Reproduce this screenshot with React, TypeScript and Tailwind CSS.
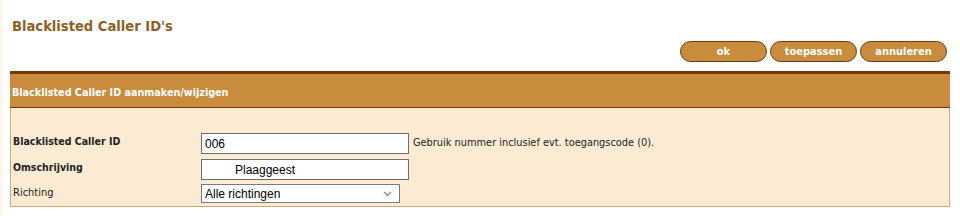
import React from 'react';

const tahoma = { fontFamily: "'DejaVu Sans Condensed', 'DejaVu Sans', sans-serif" };
const arial = { fontFamily: "'Liberation Sans', Arial, sans-serif" };

const PillButton: React.FC<{ label: string }> = ({ label }) => (
  <button
    className="w-[87px] h-[21px] rounded-full bg-[#c98c3c] border border-[#6b3a12] text-white text-[11px] font-bold leading-none font-stretch-condensed"
    style={tahoma}
  >
    {label}
  </button>
);

export default function App() {
  return (
    <div className="w-[960px] h-[216px] bg-white border-l-[3px] border-[#fcf7ee] font-stretch-condensed" style={tahoma}>
      <h1 className="pt-[17px] pl-[9px] text-[14.6px] font-bold text-[#91601f] leading-[18px]">Blacklisted Caller ID's</h1>
      <div className="flex justify-end gap-[3px] pr-[13px] mt-[6px]">
        <PillButton label="ok" />
        <PillButton label="toepassen" />
        <PillButton label="annuleren" />
      </div>
      <div className="ml-[7px] w-[940px] mt-[9px]">
        <div className="border-t-[3px] border-[#7c3507] bg-[#c98c3c] h-[37px] border-b border-b-[#7c3507] flex items-center pl-[2px] pt-[5px]">
          <span className="text-white text-[10.7px] font-bold">Blacklisted Caller ID aanmaken/wijzigen</span>
        </div>
        <div className="bg-[#fbebd2] border border-t-0 border-[#c9aa7c] h-[99px] pt-[25px] pl-[2px]">
          <div className="grid grid-cols-[188px_1fr] items-center text-[11px] text-[#222]">
            <span className="font-bold text-[10.5px] -mt-[3px]">Blacklisted Caller ID</span>
            <div className="flex items-center gap-[4px]">
              <div className="w-[208px] h-[21px] bg-white border border-[#6d6d6d] flex items-center pl-[3px] text-[12px] text-black" style={arial}>006</div>
              <span className="text-[10.9px]">Gebruik nummer inclusief evt. toegangscode (0).</span>
            </div>
            <span className="font-bold text-[10.5px] mt-[2px]">Omschrijving</span>
            <div className="mt-[5px] w-[208px] h-[21px] bg-white border border-[#6d6d6d] flex items-center pl-[33px] text-[12px] text-black" style={arial}>Plaaggeest</div>
            <span className="mt-[4px]">Richting</span>
            <div className="mt-[4px] w-[199px] h-[19px] bg-white border border-[#7a7a7a] flex items-center justify-between pl-[3px] pr-[7px] text-[12px] text-black" style={arial}>
              <span>Alle richtingen</span>
              <svg width="9" height="6" viewBox="0 0 9 6" fill="none" stroke="#8a8a8a" strokeWidth="1.3"><path d="M1 1l3.5 3.5L8 1" /></svg>
            </div>
          </div>
        </div>
      </div>
    </div>
  );
}
